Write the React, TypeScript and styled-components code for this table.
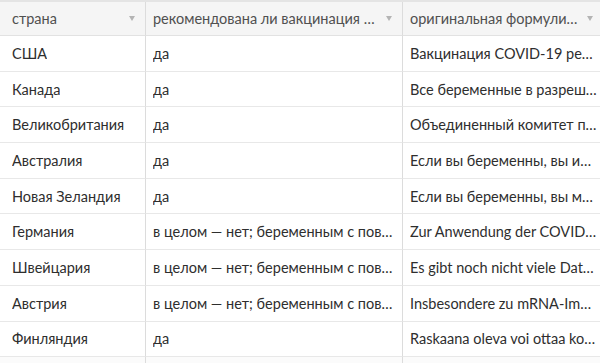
import React from 'react';
import styled, { createGlobalStyle } from 'styled-components';

interface Row {
  country: string;
  recommended: string;
  original: string;
}

const rows: Row[] = [
  { country: 'США', recommended: 'да', original: 'Вакцинация COVID-19 рекомендуется' },
  { country: 'Канада', recommended: 'да', original: 'Все беременные в разрешенных группах' },
  { country: 'Великобритания', recommended: 'да', original: 'Объединенный комитет по вакцинации' },
  { country: 'Австралия', recommended: 'да', original: 'Если вы беременны, вы имеете право' },
  { country: 'Новая Зеландия', recommended: 'да', original: 'Если вы беременны, вы можете' },
  { country: 'Германия', recommended: 'в целом — нет; беременным с повышенным риском', original: 'Zur Anwendung der COVID-19-Impfstoffe' },
  { country: 'Швейцария', recommended: 'в целом — нет; беременным с повышенным риском', original: 'Es gibt noch nicht viele Daten' },
  { country: 'Австрия', recommended: 'в целом — нет; беременным с повышенным риском', original: 'Insbesondere zu mRNA-Impfstoffen' },
  { country: 'Финляндия', recommended: 'да', original: 'Raskaana oleva voi ottaa koronarokotteen' },
];

const columns = ['страна', 'рекомендована ли вакцинация беременным', 'оригинальная формулировка'];

const GlobalStyle = createGlobalStyle`
  html, body {
    margin: 0;
    padding: 0;
    background: #fff;
    overflow: hidden;
  }
  body {
    font-family: Lato, "Open Sans", sans-serif;
  }
`;

const Table = styled.div`
  width: 604px;
  border-top: 2px solid #e4e4e4;
  display: grid;
  grid-template-columns: 146px 257px 201px;
`;

const HeaderCell = styled.div<{ $first?: boolean }>`
  height: 34px;
  background: #f5f5f5;
  border-right: 1px solid #dcdcdc;
  border-bottom: 1px solid #e2e2e2;
  display: flex;
  align-items: center;
  padding: 0 10px 0 ${p => (p.$first ? 12 : 7)}px;
  box-sizing: border-box;
  gap: 8px;
  font-size: 14.5px;
  color: #505050;
  min-width: 0;
`;

const HeaderLabel = styled.span`
  flex: 1;
  white-space: nowrap;
  overflow: hidden;
  text-overflow: ellipsis;
`;

const Caret = styled.span`
  flex: none;
  width: 0;
  height: 0;
  border-left: 3.5px solid transparent;
  border-right: 3.5px solid transparent;
  border-top: 5px solid #b4b4b4;
`;

const Cell = styled.div<{ $first?: boolean; $last?: boolean }>`
  height: 35.7px;
  box-sizing: border-box;
  border-bottom: 1px solid #e8e8e8;
  border-right: 1px solid ${p => (p.$last ? '#f3f3f3' : '#dcdcdc')};
  display: flex;
  align-items: center;
  padding: 0 ${p => (p.$last ? 6 : 8)}px 0 ${p => (p.$first ? 12 : 7)}px;
  font-size: 14.5px;
  color: #2e2e2e;
  min-width: 0;
`;

const CellText = styled.span`
  white-space: nowrap;
  overflow: hidden;
  text-overflow: ellipsis;
`;

const Filler = styled.div<{ $last?: boolean }>`
  height: 8px;
  background: #fbfbfb;
  border-right: 1px solid ${p => (p.$last ? '#f3f3f3' : '#dcdcdc')};
  border-bottom: 1px solid #ececec;
`;

export default function App() {
  return (
    <>
      <GlobalStyle />
      <Table>
        {columns.map((c, i) => (
          <HeaderCell key={c} $first={i === 0}>
            <HeaderLabel>{c}</HeaderLabel>
            <Caret />
          </HeaderCell>
        ))}
        {rows.map(r => (
          <React.Fragment key={r.country}>
            <Cell $first>
              <CellText>{r.country}</CellText>
            </Cell>
            <Cell>
              <CellText>{r.recommended}</CellText>
            </Cell>
            <Cell $last>
              <CellText>{r.original}</CellText>
            </Cell>
          </React.Fragment>
        ))}
        <Filler />
        <Filler />
        <Filler $last />
      </Table>
    </>
  );
}
